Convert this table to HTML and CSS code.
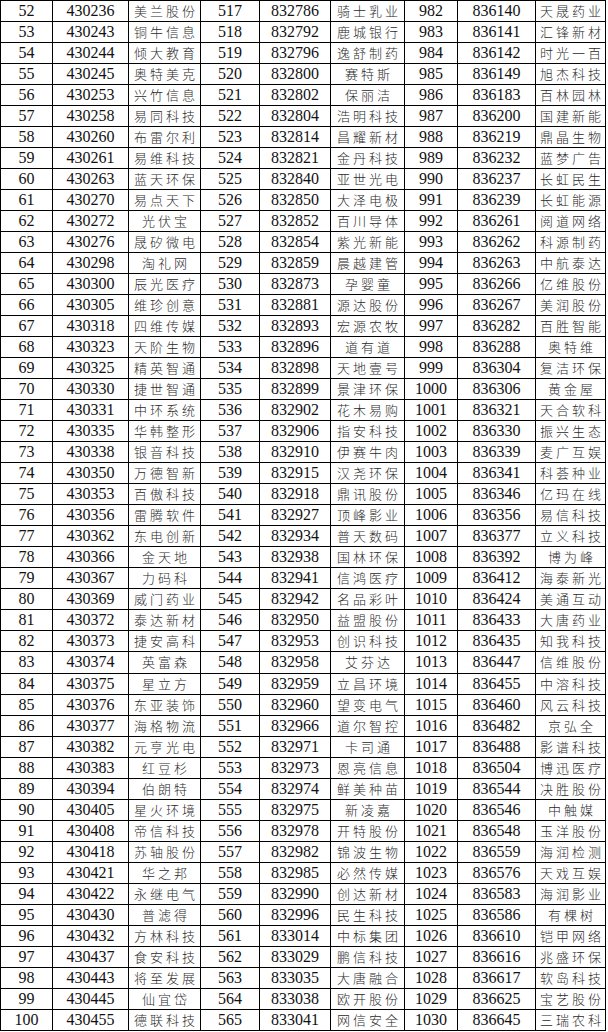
FILE: index.html
```html
<!DOCTYPE html>
<html lang="zh-CN">
<head>
<meta charset="utf-8">
<title>名单</title>
<link rel="stylesheet" href="styles.css">
</head>
<body>
<table class="sheet">
<colgroup>
<col class="w1"><col class="w2"><col class="w3"><col class="w4"><col class="w5"><col class="w6"><col class="w7"><col class="w8"><col class="w9">
</colgroup>
<tbody>
<tr><td>52</td><td>430236</td><td class="zh">美兰股份</td><td>517</td><td>832786</td><td class="zh">骑士乳业</td><td>982</td><td>836140</td><td class="zh">天晟药业</td></tr>
<tr><td>53</td><td>430243</td><td class="zh">铜牛信息</td><td>518</td><td>832792</td><td class="zh">鹿城银行</td><td>983</td><td>836141</td><td class="zh">汇锋新材</td></tr>
<tr><td>54</td><td>430244</td><td class="zh">倾大教育</td><td>519</td><td>832796</td><td class="zh">逸舒制药</td><td>984</td><td>836142</td><td class="zh">时光一百</td></tr>
<tr><td>55</td><td>430245</td><td class="zh">奥特美克</td><td>520</td><td>832800</td><td class="zh">赛特斯</td><td>985</td><td>836149</td><td class="zh">旭杰科技</td></tr>
<tr><td>56</td><td>430253</td><td class="zh">兴竹信息</td><td>521</td><td>832802</td><td class="zh">保丽洁</td><td>986</td><td>836183</td><td class="zh">百林园林</td></tr>
<tr><td>57</td><td>430258</td><td class="zh">易同科技</td><td>522</td><td>832804</td><td class="zh">浩明科技</td><td>987</td><td>836200</td><td class="zh">国建新能</td></tr>
<tr><td>58</td><td>430260</td><td class="zh">布雷尔利</td><td>523</td><td>832814</td><td class="zh">昌耀新材</td><td>988</td><td>836219</td><td class="zh">鼎晶生物</td></tr>
<tr><td>59</td><td>430261</td><td class="zh">易维科技</td><td>524</td><td>832821</td><td class="zh">金丹科技</td><td>989</td><td>836232</td><td class="zh">蓝梦广告</td></tr>
<tr><td>60</td><td>430263</td><td class="zh">蓝天环保</td><td>525</td><td>832840</td><td class="zh">亚世光电</td><td>990</td><td>836237</td><td class="zh">长虹民生</td></tr>
<tr><td>61</td><td>430270</td><td class="zh">易点天下</td><td>526</td><td>832850</td><td class="zh">大泽电极</td><td>991</td><td>836239</td><td class="zh">长虹能源</td></tr>
<tr><td>62</td><td>430272</td><td class="zh">光伏宝</td><td>527</td><td>832852</td><td class="zh">百川导体</td><td>992</td><td>836261</td><td class="zh">阅道网络</td></tr>
<tr><td>63</td><td>430276</td><td class="zh">晟矽微电</td><td>528</td><td>832854</td><td class="zh">紫光新能</td><td>993</td><td>836262</td><td class="zh">科源制药</td></tr>
<tr><td>64</td><td>430298</td><td class="zh">淘礼网</td><td>529</td><td>832859</td><td class="zh">晨越建管</td><td>994</td><td>836263</td><td class="zh">中航泰达</td></tr>
<tr><td>65</td><td>430300</td><td class="zh">辰光医疗</td><td>530</td><td>832873</td><td class="zh">孕婴童</td><td>995</td><td>836266</td><td class="zh">亿维股份</td></tr>
<tr><td>66</td><td>430305</td><td class="zh">维珍创意</td><td>531</td><td>832881</td><td class="zh">源达股份</td><td>996</td><td>836267</td><td class="zh">美润股份</td></tr>
<tr><td>67</td><td>430318</td><td class="zh">四维传媒</td><td>532</td><td>832893</td><td class="zh">宏源农牧</td><td>997</td><td>836282</td><td class="zh">百胜智能</td></tr>
<tr><td>68</td><td>430323</td><td class="zh">天阶生物</td><td>533</td><td>832896</td><td class="zh">道有道</td><td>998</td><td>836288</td><td class="zh">奥特维</td></tr>
<tr><td>69</td><td>430325</td><td class="zh">精英智通</td><td>534</td><td>832898</td><td class="zh">天地壹号</td><td>999</td><td>836304</td><td class="zh">复洁环保</td></tr>
<tr><td>70</td><td>430330</td><td class="zh">捷世智通</td><td>535</td><td>832899</td><td class="zh">景津环保</td><td>1000</td><td>836306</td><td class="zh">黄金屋</td></tr>
<tr><td>71</td><td>430331</td><td class="zh">中环系统</td><td>536</td><td>832902</td><td class="zh">花木易购</td><td>1001</td><td>836321</td><td class="zh">天合软科</td></tr>
<tr><td>72</td><td>430335</td><td class="zh">华韩整形</td><td>537</td><td>832906</td><td class="zh">指安科技</td><td>1002</td><td>836330</td><td class="zh">振兴生态</td></tr>
<tr><td>73</td><td>430338</td><td class="zh">银音科技</td><td>538</td><td>832910</td><td class="zh">伊赛牛肉</td><td>1003</td><td>836339</td><td class="zh">麦广互娱</td></tr>
<tr><td>74</td><td>430350</td><td class="zh">万德智新</td><td>539</td><td>832915</td><td class="zh">汉尧环保</td><td>1004</td><td>836341</td><td class="zh">科荟种业</td></tr>
<tr><td>75</td><td>430353</td><td class="zh">百傲科技</td><td>540</td><td>832918</td><td class="zh">鼎讯股份</td><td>1005</td><td>836346</td><td class="zh">亿玛在线</td></tr>
<tr><td>76</td><td>430356</td><td class="zh">雷腾软件</td><td>541</td><td>832927</td><td class="zh">顶峰影业</td><td>1006</td><td>836356</td><td class="zh">易信科技</td></tr>
<tr><td>77</td><td>430362</td><td class="zh">东电创新</td><td>542</td><td>832934</td><td class="zh">普天数码</td><td>1007</td><td>836377</td><td class="zh">立义科技</td></tr>
<tr><td>78</td><td>430366</td><td class="zh">金天地</td><td>543</td><td>832938</td><td class="zh">国林环保</td><td>1008</td><td>836392</td><td class="zh">博为峰</td></tr>
<tr><td>79</td><td>430367</td><td class="zh">力码科</td><td>544</td><td>832941</td><td class="zh">信鸿医疗</td><td>1009</td><td>836412</td><td class="zh">海泰新光</td></tr>
<tr><td>80</td><td>430369</td><td class="zh">威门药业</td><td>545</td><td>832942</td><td class="zh">名品彩叶</td><td>1010</td><td>836424</td><td class="zh">美通互动</td></tr>
<tr><td>81</td><td>430372</td><td class="zh">泰达新材</td><td>546</td><td>832950</td><td class="zh">益盟股份</td><td>1011</td><td>836433</td><td class="zh">大唐药业</td></tr>
<tr><td>82</td><td>430373</td><td class="zh">捷安高科</td><td>547</td><td>832953</td><td class="zh">创识科技</td><td>1012</td><td>836435</td><td class="zh">知我科技</td></tr>
<tr><td>83</td><td>430374</td><td class="zh">英富森</td><td>548</td><td>832958</td><td class="zh">艾芬达</td><td>1013</td><td>836447</td><td class="zh">信维股份</td></tr>
<tr><td>84</td><td>430375</td><td class="zh">星立方</td><td>549</td><td>832959</td><td class="zh">立昌环境</td><td>1014</td><td>836455</td><td class="zh">中溶科技</td></tr>
<tr><td>85</td><td>430376</td><td class="zh">东亚装饰</td><td>550</td><td>832960</td><td class="zh">望变电气</td><td>1015</td><td>836460</td><td class="zh">风云科技</td></tr>
<tr><td>86</td><td>430377</td><td class="zh">海格物流</td><td>551</td><td>832966</td><td class="zh">道尔智控</td><td>1016</td><td>836482</td><td class="zh">京弘全</td></tr>
<tr><td>87</td><td>430382</td><td class="zh">元亨光电</td><td>552</td><td>832971</td><td class="zh">卡司通</td><td>1017</td><td>836488</td><td class="zh">影谱科技</td></tr>
<tr><td>88</td><td>430383</td><td class="zh">红豆杉</td><td>553</td><td>832973</td><td class="zh">恩亮信息</td><td>1018</td><td>836504</td><td class="zh">博迅医疗</td></tr>
<tr><td>89</td><td>430394</td><td class="zh">伯朗特</td><td>554</td><td>832974</td><td class="zh">鲜美种苗</td><td>1019</td><td>836544</td><td class="zh">决胜股份</td></tr>
<tr><td>90</td><td>430405</td><td class="zh">星火环境</td><td>555</td><td>832975</td><td class="zh">新凌嘉</td><td>1020</td><td>836546</td><td class="zh">中触媒</td></tr>
<tr><td>91</td><td>430408</td><td class="zh">帝信科技</td><td>556</td><td>832978</td><td class="zh">开特股份</td><td>1021</td><td>836548</td><td class="zh">玉洋股份</td></tr>
<tr><td>92</td><td>430418</td><td class="zh">苏轴股份</td><td>557</td><td>832982</td><td class="zh">锦波生物</td><td>1022</td><td>836559</td><td class="zh">海润检测</td></tr>
<tr><td>93</td><td>430421</td><td class="zh">华之邦</td><td>558</td><td>832985</td><td class="zh">必然传媒</td><td>1023</td><td>836576</td><td class="zh">天戏互娱</td></tr>
<tr><td>94</td><td>430422</td><td class="zh">永继电气</td><td>559</td><td>832990</td><td class="zh">创达新材</td><td>1024</td><td>836583</td><td class="zh">海润影业</td></tr>
<tr><td>95</td><td>430430</td><td class="zh">普滤得</td><td>560</td><td>832996</td><td class="zh">民生科技</td><td>1025</td><td>836586</td><td class="zh">有棵树</td></tr>
<tr><td>96</td><td>430432</td><td class="zh">方林科技</td><td>561</td><td>833014</td><td class="zh">中标集团</td><td>1026</td><td>836610</td><td class="zh">铠甲网络</td></tr>
<tr><td>97</td><td>430437</td><td class="zh">食安科技</td><td>562</td><td>833029</td><td class="zh">鹏信科技</td><td>1027</td><td>836616</td><td class="zh">兆盛环保</td></tr>
<tr><td>98</td><td>430443</td><td class="zh">将至发展</td><td>563</td><td>833035</td><td class="zh">大唐融合</td><td>1028</td><td>836617</td><td class="zh">软岛科技</td></tr>
<tr><td>99</td><td>430445</td><td class="zh">仙宜岱</td><td>564</td><td>833038</td><td class="zh">欧开股份</td><td>1029</td><td>836625</td><td class="zh">宝艺股份</td></tr>
<tr><td>100</td><td>430455</td><td class="zh">德联科技</td><td>565</td><td>833041</td><td class="zh">网信安全</td><td>1030</td><td>836645</td><td class="zh">三瑞农科</td></tr>
</tbody>
</table>
</body>
</html>
```
FILE: styles.css
```css
html, body {
  margin: 0;
  padding: 0;
  background: #ffffff;
}

.sheet {
  border-collapse: collapse;
  table-layout: fixed;
  width: 606px;
  height: 1031px;
  margin: 0;
}

.w1 { width: 52px; }
.w2 { width: 76px; }
.w3 { width: 72px; }
.w4 { width: 59px; }
.w5 { width: 71px; }
.w6 { width: 74px; }
.w7 { width: 53px; }
.w8 { width: 78px; }
.w9 { width: 70px; }

.sheet td {
  border: 1px solid #000;
  padding: 0;
  text-align: center;
  vertical-align: middle;
  white-space: nowrap;
  overflow: hidden;
  font-family: "Liberation Serif", "Times New Roman", serif;
  font-size: 16px;
  line-height: 18px;
  color: #111;
}

.sheet td.zh {
  font-family: "Noto Sans CJK SC", "Noto Sans", sans-serif;
  font-weight: 300;
  font-size: 13px;
  letter-spacing: 3px;
  text-indent: 3px;
  color: #2a2a2a;
}
```
